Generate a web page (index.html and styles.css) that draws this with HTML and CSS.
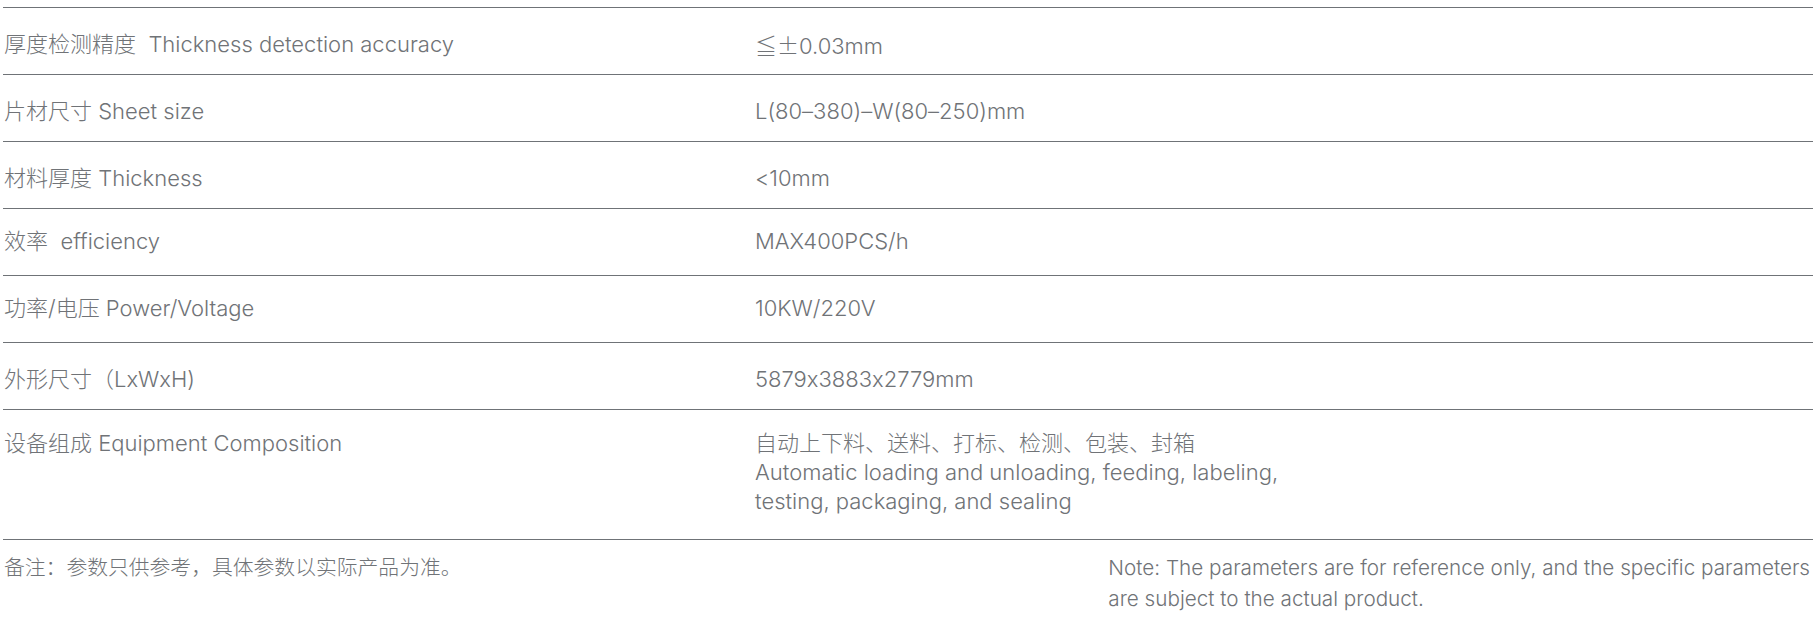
FILE: index.html
```html
<!DOCTYPE html>
<html lang="zh-CN">
<head>
<meta charset="utf-8">
<title>参数</title>
<link rel="stylesheet" href="styles.css">
</head>
<body>
<div class="specs">
  <div class="row">
    <div class="label">厚度检测精度&nbsp; Thickness detection accuracy</div>
    <div class="value"><span class="cjk">≦±</span>0.03mm</div>
  </div>
  <div class="row">
    <div class="label">片材尺寸 Sheet size</div>
    <div class="value">L(80–380)–W(80–250)mm</div>
  </div>
  <div class="row">
    <div class="label">材料厚度 Thickness</div>
    <div class="value">&lt;10mm</div>
  </div>
  <div class="row row--high">
    <div class="label">效率&nbsp; efficiency</div>
    <div class="value">MAX400PCS/h</div>
  </div>
  <div class="row row--high">
    <div class="label">功率/电压 Power/Voltage</div>
    <div class="value">10KW/220V</div>
  </div>
  <div class="row">
    <div class="label">外形尺寸（LxWxH)</div>
    <div class="value">5879x3883x2779mm</div>
  </div>
  <div class="row row--multi">
    <div class="label">设备组成 Equipment Composition</div>
    <div class="value">自动上下料、送料、打标、检测、包装、封箱<br>Automatic loading and unloading, feeding, labeling,<br>testing, packaging, and sealing</div>
  </div>
</div>
<div class="notes">
  <p class="note-cn">备注：参数只供参考，具体参数以实际产品为准。</p>
  <p class="note-en">Note: The parameters are for reference only, and the specific parameters<br>are subject to the actual product.</p>
</div>
</body>
</html>
```
FILE: styles.css
```css
html, body {
  margin: 0;
  padding: 0;
  background: #ffffff;
}

body {
  font-family: "Inter", "Noto Sans CJK SC", sans-serif;
  font-weight: 300;
  font-feature-settings: "calt" 0;
  color: #707377;
  width: 1819px;
  height: 627px;
  overflow: hidden;
}

.cjk {
  font-family: "Noto Sans CJK SC", sans-serif;
}

.specs {
  margin: 7px 6px 0 3px;
  border-bottom: 1px solid #6f7377;
}

.row {
  box-sizing: border-box;
  height: 67px;
  display: grid;
  grid-template-columns: 751px 1fr;
  align-items: start;
  border-top: 1px solid #6f7377;
  padding: 22px 0 0 1px;
  font-size: 22px;
  line-height: 29px;
}

.label,
.value {
  height: 29px;
}

.row--high {
  padding-top: 18px;
}

.row--multi {
  height: 130px;
  padding-top: 19px;
}

.row--multi .value {
  height: auto;
}

.notes {
  display: flex;
  justify-content: space-between;
  margin: 0 9px 0 4px;
  padding-top: 12px;
  line-height: 31px;
}

.notes p {
  margin: 0;
  height: 31px;
}

.note-cn {
  font-size: 20.8px;
}

.note-en {
  font-size: 20.7px;
  white-space: nowrap;
  height: auto;
}
```
